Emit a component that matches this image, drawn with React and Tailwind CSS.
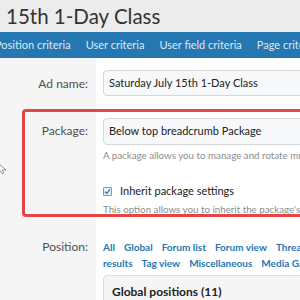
import React from "react";

const tabs = ["Position criteria", "User criteria", "User field criteria", "Page criteria"];
const positionLines = [
  ["All", "Global", "Forum list", "Forum view", "Thread view", "Search"],
  ["results", "Tag view", "Miscellaneous", "Media Gallery"],
];

const Label = ({ children, className = "" }) => (
  <div className={`w-[96px] shrink-0 bg-[#f5f5f5] pr-[8px] text-right text-[12px] leading-[16px] text-[#505050] ${className}`}>
    {children}
  </div>
);

const App = () => {
  return (
    <div className="relative h-[300px] w-[300px] overflow-hidden bg-white" style={{ fontFamily: 'Lato, "Open Sans", sans-serif' }}>
      <div className="flex h-[32px] items-center bg-[#ececec] pl-[6px] text-[20.5px] text-[#333]">
        <span className="whitespace-nowrap">15th 1-Day Class</span>
      </div>
      <div className="flex h-[26px] items-center gap-[15px] whitespace-nowrap bg-[#2577b1] text-[11px] text-[#dce9f4]">
        {tabs.map((t, i) => (
          <span key={t} className={i === 0 ? "-ml-[5px]" : ""}>{t}</span>
        ))}
      </div>

      <div className="flex">
        <Label className="pt-[18px] pb-[10px]">Ad name:</Label>
        <div className="min-w-0 flex-1 overflow-hidden pl-[7px] pt-[12px] pb-[11px]">
          <div className="flex h-[26px] w-[260px] items-center whitespace-nowrap rounded-[4px] border border-[#d8d8d8] bg-[#f7f8f9] pl-[5px] text-[11px] text-[#222]">
            Saturday July 15th 1-Day Class
          </div>
        </div>
      </div>

      <div className="flex">
        <Label className="pt-[16px]">Package:</Label>
        <div className="min-w-0 flex-1 overflow-hidden pl-[7px] pt-[11px]">
          <div className="flex h-[27px] w-[260px] items-center whitespace-nowrap rounded-[4px] border border-[#d8d8d8] bg-[#f7f8f9] pl-[5px] text-[11px] text-[#222]">
            Below top breadcrumb Package
          </div>
          <div className="mt-[3px] whitespace-nowrap text-[9.75px] leading-[14px] text-[#8c8c8c]">
            A package allows you to manage and rotate multiple ads
          </div>
          <div className="mt-[21px] flex h-[16px] items-center gap-[8px] whitespace-nowrap text-[11px] text-[#222]">
            <span className="flex h-[9px] w-[9px] items-center justify-center rounded-[1px] border border-[#47a7eb] bg-[#e8f3fb]">
              <svg width="7" height="7" viewBox="0 0 8 8">
                <path d="M1 4.2 L3.2 6.2 L7 1.6" stroke="#2577b1" strokeWidth="1.4" fill="none" />
              </svg>
            </span>
            <span>Inherit package settings</span>
          </div>
          <div className="mt-[3px] whitespace-nowrap text-[9.75px] leading-[14px] text-[#8c8c8c]">
            This option allows you to inherit the package's settings
          </div>
        </div>
      </div>

      <div className="flex">
        <Label className="pt-[23px]">Position:</Label>
        <div className="min-w-0 flex-1 overflow-hidden pl-[7px] pt-[23px]">
          {positionLines.map((line, i) => (
            <div key={i} className="flex gap-[9px] whitespace-nowrap text-[10px] font-bold leading-[16px] text-[#2577b1]">
              {line.map((p) => (
                <span key={p}>{p}</span>
              ))}
            </div>
          ))}
          <div className="mt-[4px] h-[40px] w-[240px] rounded-t-[4px] border border-[#dcdcdc] bg-[#f5f5f5] pl-[8px] pt-[7px] text-[12px] font-bold whitespace-nowrap text-[#222]">
            Global positions (11)
          </div>
        </div>
      </div>

      <div className="pointer-events-none absolute left-[22px] top-[109px] h-[108px] w-[300px] rounded-[4px] border-[3px] border-[#e04848]" />

      <svg className="absolute left-0 top-[162px]" width="8" height="12" viewBox="0 0 8 12">
        <path d="M-3 0 L6 8 L2 8 L4 11 L2 11.5 L0 8.5 L-3 11 Z" fill="#fff" stroke="#777" strokeWidth="0.8" />
      </svg>
    </div>
  );
};

export default App;
